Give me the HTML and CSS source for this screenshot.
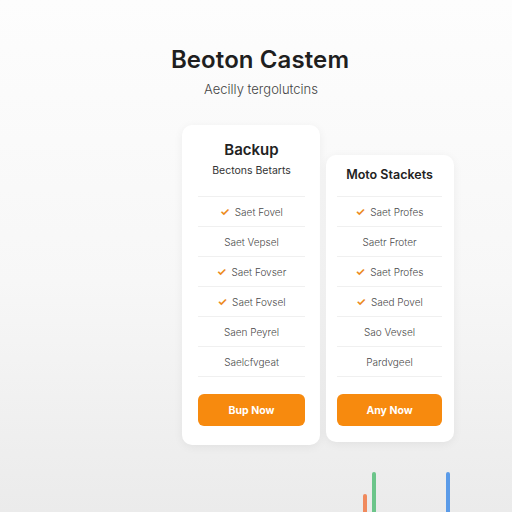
FILE: index.html
```html
<!DOCTYPE html>
<html lang="en">
<head>
  <meta charset="UTF-8">
  <meta name="viewport" content="width=device-width, initial-scale=1.0">
  <title>Beoton Castem</title>
  <link rel="stylesheet" href="styles.css">
</head>
<body>
  <div class="header">
    <h1>Beoton Castem</h1>
    <p class="subtitle">Aecilly tergolutcins</p>
  </div>

  <div class="plans">
    <div class="card card-main">
      <h2>Backup</h2>
      <p class="card-sub">Bectons Betarts</p>
      <ul class="features">
        <li><span class="check">&#10003;</span>Saet Fovel</li>
        <li>Saet Vepsel</li>
        <li><span class="check">&#10003;</span>Saet Fovser</li>
        <li><span class="check">&#10003;</span>Saet Fovsel</li>
        <li>Saen Peyrel</li>
        <li>Saelcfvgeat</li>
      </ul>
      <button class="btn">Bup Now</button>
    </div>

    <div class="card card-alt">
      <h2 class="small">Moto Stackets</h2>
      <ul class="features">
        <li><span class="check">&#10003;</span>Saet Profes</li>
        <li>Saetr Froter</li>
        <li><span class="check">&#10003;</span>Saet Profes</li>
        <li><span class="check">&#10003;</span>Saed Povel</li>
        <li>Sao Vevsel</li>
        <li>Pardvgeel</li>
      </ul>
      <button class="btn">Any Now</button>
    </div>
  </div>

  <!-- decorative bars peeking from the bottom -->
  <div class="bars">
    <span class="bar bar-orange"></span>
    <span class="bar bar-green"></span>
    <span class="bar bar-blue"></span>
  </div>
</body>
</html>
```

FILE: styles.css
```css
/* Page */
body {
  margin: 0;
  padding: 0;
  height: 512px;
  overflow: hidden;
  font-family: Inter, "Noto Sans", sans-serif;
  color: #333;
  background: linear-gradient(#fdfdfd 0%, #f7f7f7 55%, #ebebeb 100%);
  display: flex;
  flex-direction: column;
}

.header {
  padding-top: 46px;
  width: 520px;
  text-align: center;
}

h1 {
  margin: 0;
  font-size: 24px;
  line-height: 28px;
  font-weight: 600;
  color: #1f1f1f;
  letter-spacing: 0.1px;
}

.subtitle {
  margin: 6px 0 0;
  font-size: 13px;
  line-height: 18px;
  font-weight: 300;
  color: #444;
  padding-left: 2px;
}

/* Plan cards */
.plans {
  display: flex;
  align-items: flex-start;
  gap: 6px;
  padding-left: 182px;
  margin-top: 27px;
}

.card {
  background: #fff;
  border-radius: 10px;
  box-shadow: 0 2px 10px rgba(0, 0, 0, 0.06);
  text-align: center;
  box-sizing: border-box;
}

.card-main {
  width: 138px;
  padding: 16px 15px 19px 16px;
}

.card-alt {
  width: 128px;
  margin-top: 30px;
  padding: 11px 12px 16px 11px;
}

.card h2 {
  margin: 0;
  font-size: 15px;
  line-height: 18px;
  font-weight: 600;
  color: #222;
}

.card h2.small {
  font-size: 12.5px;
}

.card-sub {
  margin: 5px 0 0;
  font-size: 10.5px;
  line-height: 14px;
  color: #333;
}

.features {
  list-style: none;
  margin: 18px 0 0;
  padding: 0;
  border-bottom: 1px solid #f0f0f0;
}

.card-alt .features {
  margin-top: 12px;
}

.features li {
  height: 30px;
  line-height: 30px;
  border-top: 1px solid #f0f0f0;
  font-size: 10px;
  font-weight: 300;
  color: #4a4a4a;
  box-sizing: border-box;
}

.check {
  color: #ec8a1c;
  font-weight: 700;
  font-size: 11px;
  margin-right: 5px;
}

.btn {
  display: block;
  width: 100%;
  height: 32px;
  margin-top: 17px;
  border: none;
  border-radius: 6px;
  background-color: #f78a0e;
  color: #fff;
  font-family: inherit;
  font-size: 10.5px;
  font-weight: 700;
  cursor: pointer;
}

/* Bottom bars */
.bars {
  display: flex;
  align-items: flex-end;
  padding-left: 363px;
  margin-top: auto;
  height: 40px;
}

.bar {
  width: 4px;
  border-radius: 2px 2px 0 0;
}

.bar-orange {
  height: 18px;
  background: #f08a5d;
}

.bar-green {
  height: 40px;
  margin-left: 5px;
  background: #6cc58a;
}

.bar-blue {
  height: 40px;
  margin-left: 70px;
  background: #5b9be8;
}
```
